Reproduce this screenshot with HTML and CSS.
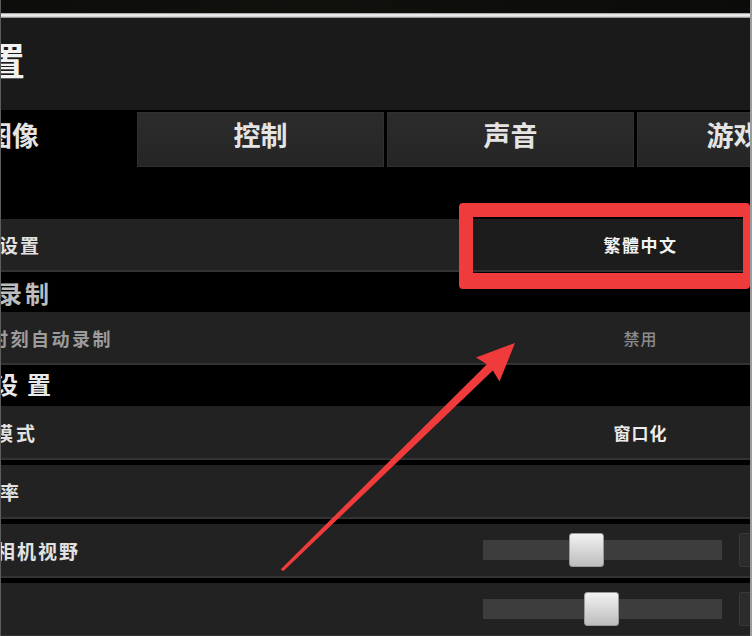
FILE: index.html
```html
<!DOCTYPE html>
<html lang="zh">
<head>
<meta charset="utf-8">
<title>设置</title>
<link rel="stylesheet" href="styles.css">
</head>
<body>
<div class="screen">
  <div class="topbar"></div>
  <div class="rule"></div>
  <header class="title-bar"><h1 class="title">置</h1></header>
  <nav class="tabs">
    <div class="tab tab-active"><span class="tab-cut">图像</span></div>
    <div class="tab">控制</div>
    <div class="tab">声音</div>
    <div class="tab">游戏玩法</div>
  </nav>
  <section class="list">
    <div class="row">
      <span class="label label-lang">设置</span>
      <div class="value value-field"><span class="lang">繁體中文</span></div>
    </div>
    <h2 class="section section-dim">录制</h2>
    <div class="row">
      <span class="label label-muted">时刻自动录制</span>
      <div class="value value-muted">禁用</div>
    </div>
    <h2 class="section section-wide">设置</h2>
    <div class="group">
      <div class="row">
        <span class="label label-mode">模式</span>
        <div class="value">窗口化</div>
      </div>
      <div class="row">
        <span class="label">率</span>
        <div class="value"></div>
      </div>
      <div class="row">
        <span class="label label-fov">相机视野</span>
        <div class="value slider-cell">
          <div class="track"><div class="thumb" style="left:36%"></div></div>
          <div class="num-box"></div>
        </div>
      </div>
      <div class="row">
        <span class="label"></span>
        <div class="value slider-cell">
          <div class="track"><div class="thumb" style="left:42.3%"></div></div>
          <div class="num-box"></div>
        </div>
      </div>
    </div>
  </section>
  <div class="highlight"></div>
  <svg class="arrow" width="752" height="636" viewBox="0 0 752 636">
    <polygon points="515,343 499.5,381.5 492.8,370.6 283.5,571 280.5,569.5 486.9,364.3 476,357.5" fill="#ef3b3b"/>
  </svg>
</div>
</body>
</html>
```
FILE: styles.css
```css
* { box-sizing: border-box; }

html, body {
  margin: 0;
  padding: 0;
  background: #000;
  overflow: hidden;
}

body {
  font-family: "Noto Sans CJK SC", "Noto Sans CJK TC", sans-serif;
  color: #e6e6e6;
}

.screen {
  position: relative;
  width: 752px;
  height: 636px;
  overflow: hidden;
  background: #000;
}

.screen::after {
  content: "";
  position: absolute;
  inset: 0;
  box-shadow: inset 1px 0 0 #5c5c5c, inset -2px 0 0 #9c9c9c;
  pointer-events: none;
}

.topbar {
  height: 13px;
  background: linear-gradient(90deg, #0d0e0b, #10110d 40%, #0b0b09);
}

.rule {
  height: 5px;
  background: linear-gradient(180deg, #8e8e8e 0%, #f4f4f4 35%, #e4e4e4 65%, #7a7a7a 100%);
}

.title-bar {
  height: 92px;
  background: #1a1a1a;
  padding-top: 21px;
}

.title {
  margin: 0 0 0 -13px;
  font-size: 38px;
  line-height: 40px;
  font-weight: 700;
  color: #f2f2f2;
}

.tabs {
  height: 58px;
  padding-top: 2px;
  display: flex;
  gap: 3px;
  background: #000;
}

.tab {
  flex: 0 0 247px;
  height: 55px;
  display: flex;
  align-items: center;
  justify-content: center;
  padding-bottom: 10px;
  font-size: 27px;
  font-weight: 700;
  color: #e4e4e4;
  background: linear-gradient(180deg, #2c2c2c, #252525);
  box-shadow: inset 0 0 0 1px #303030;
}

.tab-active {
  flex-basis: 134px;
  justify-content: flex-start;
  background: #000;
  box-shadow: none;
}

.tab-cut {
  margin-left: -15px;
}

.list {
  padding-top: 51px;
}

.row {
  height: 53px;
  display: grid;
  grid-template-columns: 473px 335px;
  align-items: center;
  background: #222;
  border-bottom: 2px solid #333;
}

.label {
  font-size: 19px;
  font-weight: 700;
  letter-spacing: 2px;
  color: #e2e2e2;
  white-space: nowrap;
}

.label-lang { margin-left: -1px; }
.label-mode { margin-left: -6px; letter-spacing: 3px; }
.label-fov { margin-left: -4px; }

.label-muted {
  margin-left: -10px;
  font-size: 18px;
  letter-spacing: 2.5px;
  color: #9c9c9c;
}

.value {
  height: 100%;
  display: flex;
  align-items: center;
  justify-content: center;
  font-size: 17px;
  font-weight: 700;
  letter-spacing: 1px;
  color: #ececec;
}

.value-field {
  background: #1c1c1c;
}

.lang {
  font-family: "Noto Sans CJK TC", "Noto Sans CJK SC", sans-serif;
  letter-spacing: 1.5px;
  color: #f2f2f2;
}

.value-muted {
  font-size: 16px;
  font-weight: 500;
  color: #8c8c8c;
}

.section {
  margin: 0;
  height: 40px;
  display: flex;
  align-items: center;
  font-size: 24px;
  font-weight: 700;
  letter-spacing: 3px;
  white-space: nowrap;
  background: #000;
}

.section-dim {
  margin-left: -2px;
  color: #bdbdbd;
}

.section-wide {
  height: 41px;
  margin-left: -6px;
  padding-bottom: 4px;
  letter-spacing: 9px;
  color: #e8e8e8;
}

.group {
  display: flex;
  flex-direction: column;
  gap: 5px;
}

.group .row {
  height: 54px;
}

.slider-cell {
  justify-content: flex-start;
  padding-left: 10px;
  gap: 17px;
}

.track {
  position: relative;
  flex: 0 0 239px;
  height: 20px;
  background: #3d3d3d;
}

.thumb {
  position: absolute;
  top: 50%;
  width: 35px;
  height: 34px;
  transform: translateY(-50%);
  background: linear-gradient(180deg, #f2f2f2, #bdbdbd);
  border: 1px solid #9a9a9a;
  border-radius: 3px;
}

.num-box {
  flex: 0 0 50px;
  height: 34px;
  background: #2b2b2b;
  border: 1px solid #383838;
  border-radius: 2px;
}

.highlight {
  position: absolute;
  left: 459px;
  top: 203px;
  width: 291px;
  height: 86px;
  border: 14px solid #ef3b3b;
  border-right-width: 7px;
  border-bottom-width: 16px;
  border-radius: 4px;
}

.arrow {
  position: absolute;
  left: 0;
  top: 0;
  pointer-events: none;
}
```
